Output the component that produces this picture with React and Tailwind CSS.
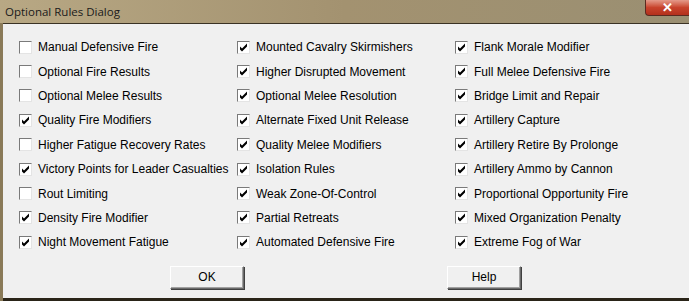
import React from 'react';

const columns = [
  [
    ['Manual Defensive Fire', false],
    ['Optional Fire Results', false],
    ['Optional Melee Results', false],
    ['Quality Fire Modifiers', true],
    ['Higher Fatigue Recovery Rates', false],
    ['Victory Points for Leader Casualties', true],
    ['Rout Limiting', false],
    ['Density Fire Modifier', true],
    ['Night Movement Fatigue', true],
  ],
  [
    ['Mounted Cavalry Skirmishers', true],
    ['Higher Disrupted Movement', true],
    ['Optional Melee Resolution', true],
    ['Alternate Fixed Unit Release', true],
    ['Quality Melee Modifiers', true],
    ['Isolation Rules', true],
    ['Weak Zone-Of-Control', true],
    ['Partial Retreats', true],
    ['Automated Defensive Fire', true],
  ],
  [
    ['Flank Morale Modifier', true],
    ['Full Melee Defensive Fire', true],
    ['Bridge Limit and Repair', true],
    ['Artillery Capture', true],
    ['Artillery Retire By Prolonge', true],
    ['Artillery Ammo by Cannon', true],
    ['Proportional Opportunity Fire', true],
    ['Mixed Organization Penalty', true],
    ['Extreme Fog of War', true],
  ],
];

const CheckBox = ({ checked }) => (
  <div className="w-[13px] h-[13px] shrink-0 border border-t-[#7a7a7a] border-l-[#7a7a7a] border-r-[#e4e4e4] border-b-[#e4e4e4] bg-white flex items-center justify-center">
    {checked && (
      <svg width="9" height="9" viewBox="0 0 9 9">
        <path d="M1 3.5 L3 5.5 L8 0.5 L8 3.5 L3 8.5 L1 6.5 Z" fill="#000" />
      </svg>
    )}
  </div>
);

const Row = ({ label, checked }) => (
  <div className="h-[24.4px] flex items-center gap-[6px]">
    <CheckBox checked={checked} />
    <span className="text-[12px] text-black leading-none whitespace-nowrap">{label}</span>
  </div>
);

const DlgButton = ({ children }) => (
  <div className="w-[74px] h-[23px] bg-[#f0f0f0] border border-t-white border-l-white border-r-[#6a6a6a] border-b-[#6a6a6a] shadow-[1px_1px_0_#404040,inset_-1px_-1px_0_#a0a0a0] flex items-center justify-center text-[12px] text-black">
    {children}
  </div>
);

export default function App() {
  return (
    <div
      className="w-[689px] h-[301px] bg-[#8a7a58] flex flex-col overflow-hidden"
      style={{ fontFamily: '"Liberation Sans", Arial, sans-serif' }}
    >
      <div className="h-[23px] shrink-0 flex items-start bg-gradient-to-r from-[#b8a884] via-[#a39270] to-[#9a8f72] relative">
        <span className="ml-[5px] mt-[3px] text-[11.5px] text-[#1a1a1a]" style={{ fontFamily: '"Open Sans", "Noto Sans", sans-serif' }}>
          Optional Rules Dialog
        </span>
        <div className="absolute right-0 top-0 w-[44px] h-[16px] rounded-bl-[4px] bg-gradient-to-b from-[#e49a8a] via-[#c8432c] to-[#b3301c] border border-[#5a2a20] border-t-0 border-r-0 flex items-center justify-center">
          <span className="text-white font-bold text-[13px] leading-none">✕</span>
        </div>
      </div>
      <div className="flex-1 ml-[3px] bg-[#f0f0f0] border-t border-[#3a3224] border-b-[3px] border-b-[#2a2418] flex flex-col">
        <div className="flex pl-[16px] pt-[11px]">
          <div className="w-[218px] flex flex-col">
            {columns[0].map(([l, c]) => <Row key={l} label={l} checked={c} />)}
          </div>
          <div className="w-[218px] flex flex-col">
            {columns[1].map(([l, c]) => <Row key={l} label={l} checked={c} />)}
          </div>
          <div className="flex flex-col">
            {columns[2].map(([l, c]) => <Row key={l} label={l} checked={c} />)}
          </div>
        </div>
        <div className="flex mt-[11px]">
          <div className="ml-[167px]"><DlgButton>OK</DlgButton></div>
          <div className="ml-[203px]"><DlgButton>Help</DlgButton></div>
        </div>
      </div>
    </div>
  );
}
